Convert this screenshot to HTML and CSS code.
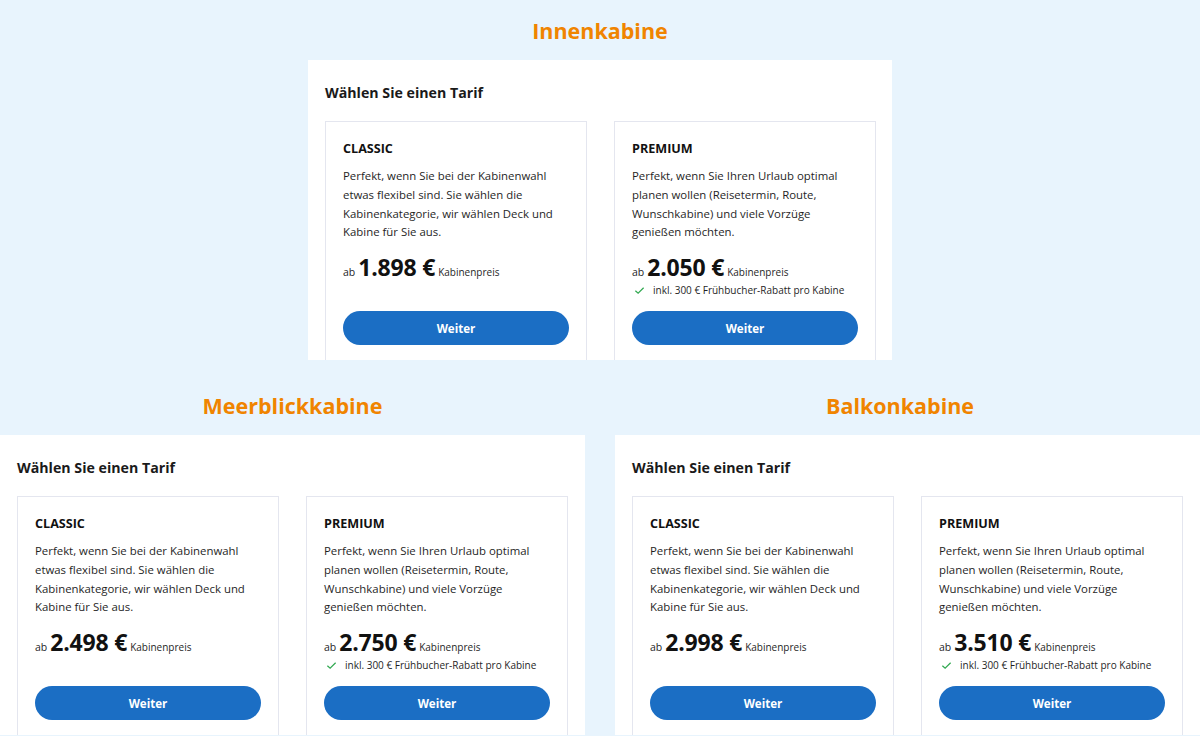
FILE: index.html
```html
<!DOCTYPE html>
<html lang="de">
<head>
<meta charset="utf-8">
<title>Tarife</title>
<link rel="stylesheet" href="styles.css">
</head>
<body>
<main class="grid">
  <section class="cabin cabin-featured">
    <h2 class="cabin-title">Innenkabine</h2>
    <div class="panel">
      <h3 class="panel-title">Wählen Sie einen Tarif</h3>
      <div class="cards">
        <div class="card">
          <h4 class="card-title">CLASSIC</h4>
          <p class="desc">Perfekt, wenn Sie bei der Kabinenwahl etwas flexibel sind. Sie wählen die Kabinenkategorie, wir wählen Deck und Kabine für Sie aus.</p>
          <div class="price"><span class="ab">ab</span> <span class="amount">1.898 €</span> <span class="label">Kabinenpreis</span></div>
          <button class="btn">Weiter</button>
        </div>
        <div class="card">
          <h4 class="card-title">PREMIUM</h4>
          <p class="desc">Perfekt, wenn Sie Ihren Urlaub optimal planen wollen (Reisetermin, Route, Wunschkabine) und viele Vorzüge genießen möchten.</p>
          <div class="price"><span class="ab">ab</span> <span class="amount">2.050 €</span> <span class="label">Kabinenpreis</span></div>
          <div class="perk"><svg class="check" viewBox="0 0 12 12" width="11" height="11"><path d="M1.5 6.3 L4.5 9 L10.5 3" fill="none" stroke="#2fa84f" stroke-width="1.3"/></svg><span>inkl. 300 € Frühbucher-Rabatt pro Kabine</span></div>
          <button class="btn">Weiter</button>
        </div>
      </div>
    </div>
  </section>

  <section class="cabin">
    <h2 class="cabin-title">Meerblickkabine</h2>
    <div class="panel">
      <h3 class="panel-title">Wählen Sie einen Tarif</h3>
      <div class="cards">
        <div class="card">
          <h4 class="card-title">CLASSIC</h4>
          <p class="desc">Perfekt, wenn Sie bei der Kabinenwahl etwas flexibel sind. Sie wählen die Kabinenkategorie, wir wählen Deck und Kabine für Sie aus.</p>
          <div class="price"><span class="ab">ab</span> <span class="amount">2.498 €</span> <span class="label">Kabinenpreis</span></div>
          <button class="btn">Weiter</button>
        </div>
        <div class="card">
          <h4 class="card-title">PREMIUM</h4>
          <p class="desc">Perfekt, wenn Sie Ihren Urlaub optimal planen wollen (Reisetermin, Route, Wunschkabine) und viele Vorzüge genießen möchten.</p>
          <div class="price"><span class="ab">ab</span> <span class="amount">2.750 €</span> <span class="label">Kabinenpreis</span></div>
          <div class="perk"><svg class="check" viewBox="0 0 12 12" width="11" height="11"><path d="M1.5 6.3 L4.5 9 L10.5 3" fill="none" stroke="#2fa84f" stroke-width="1.3"/></svg><span>inkl. 300 € Frühbucher-Rabatt pro Kabine</span></div>
          <button class="btn">Weiter</button>
        </div>
      </div>
    </div>
  </section>

  <section class="cabin cabin-right">
    <h2 class="cabin-title">Balkonkabine</h2>
    <div class="panel">
      <h3 class="panel-title">Wählen Sie einen Tarif</h3>
      <div class="cards">
        <div class="card">
          <h4 class="card-title">CLASSIC</h4>
          <p class="desc">Perfekt, wenn Sie bei der Kabinenwahl etwas flexibel sind. Sie wählen die Kabinenkategorie, wir wählen Deck und Kabine für Sie aus.</p>
          <div class="price"><span class="ab">ab</span> <span class="amount">2.998 €</span> <span class="label">Kabinenpreis</span></div>
          <button class="btn">Weiter</button>
        </div>
        <div class="card">
          <h4 class="card-title">PREMIUM</h4>
          <p class="desc">Perfekt, wenn Sie Ihren Urlaub optimal planen wollen (Reisetermin, Route, Wunschkabine) und viele Vorzüge genießen möchten.</p>
          <div class="price"><span class="ab">ab</span> <span class="amount">3.510 €</span> <span class="label">Kabinenpreis</span></div>
          <div class="perk"><svg class="check" viewBox="0 0 12 12" width="11" height="11"><path d="M1.5 6.3 L4.5 9 L10.5 3" fill="none" stroke="#2fa84f" stroke-width="1.3"/></svg><span>inkl. 300 € Frühbucher-Rabatt pro Kabine</span></div>
          <button class="btn">Weiter</button>
        </div>
      </div>
    </div>
  </section>
</main>
</body>
</html>
```

FILE: styles.css
```css
* { box-sizing: border-box; }
html, body { margin: 0; padding: 0; }
body {
  background: #e8f4fd;
  font-family: "Open Sans", "Noto Sans", sans-serif;
  color: #1a1a1a;
  width: 1200px;
  height: 736px;
  overflow: hidden;
}
.grid {
  display: grid;
  grid-template-columns: 585px 585px;
  column-gap: 30px;
  row-gap: 15px;
}
.cabin {
  display: flex;
  flex-direction: column;
}
.cabin-featured {
  grid-column: 1 / -1;
  justify-self: center;
  width: 584px;
}
.cabin-title {
  margin: 0;
  height: 60px;
  display: flex;
  align-items: center;
  justify-content: center;
  color: #f08400;
  font-size: 21.5px;
  font-weight: 700;
}
.cabin-right .cabin-title {
  margin-left: -15px;
}
.panel {
  background: #fff;
  height: 300px;
  overflow: hidden;
  padding: 23px 16px 0 17px;
}
.panel-title {
  margin: 0 0 18px;
  font-size: 14.2px;
  line-height: 20px;
  font-weight: 700;
  color: #1a1a1a;
}
.cards {
  display: flex;
  gap: 27px;
}
.card {
  flex: 0 0 262px;
  border: 1px solid #e4e6ef;
  padding: 18px 17px 17px;
  display: flex;
  flex-direction: column;
}
.card-title {
  margin: 0 0 9px;
  font-size: 12.6px;
  line-height: 18px;
  font-weight: 700;
  color: #111;
}
.desc {
  margin: 0 0 9px;
  font-size: 11.4px;
  line-height: 18.8px;
  color: #1f1f1f;
}
.price {
  display: flex;
  align-items: baseline;
  gap: 3px;
  height: 30px;
}
.ab { font-size: 10.5px; color: #1f1f1f; }
.amount { font-size: 23px; font-weight: 700; color: #111; letter-spacing: -0.2px; }
.label { font-size: 10px; color: #1f1f1f; }
.perk {
  display: flex;
  align-items: center;
  gap: 8px;
  margin-top: 1px;
  padding-left: 2px;
  font-size: 10px;
  line-height: 16px;
  color: #1f1f1f;
}
.check { flex: none; }
.btn {
  margin-top: auto;
  height: 34px;
  width: 100%;
  border: none;
  border-radius: 17px;
  background: #1b6ec4;
  color: #fff;
  font-family: inherit;
  font-size: 11.6px;
  font-weight: 700;
  cursor: pointer;
}
.card .perk + .btn { margin-top: 13px; }
```
